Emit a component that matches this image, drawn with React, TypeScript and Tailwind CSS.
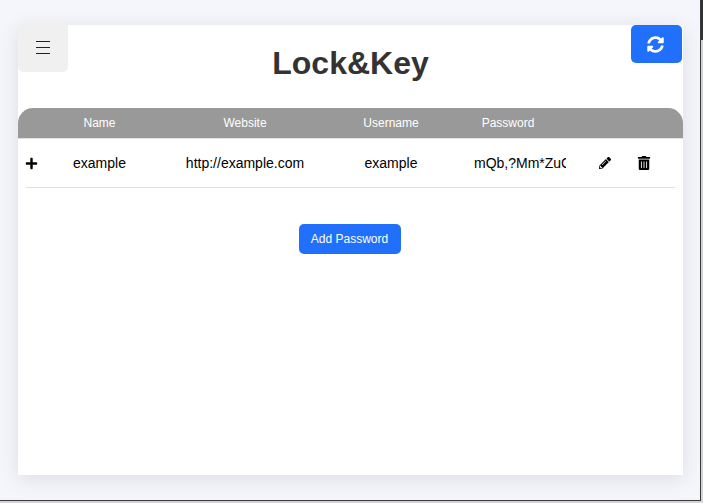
import { FaPencilAlt, FaPlus, FaSyncAlt, FaTrashAlt } from "react-icons/fa";

const rowGrid = "grid grid-cols-[38px_87px_204px_88px_146px_47px_1fr] items-center";

export default function App() {
    return (
        <div className="relative h-[503px] w-[703px] overflow-hidden bg-[#d4d4d6] font-['Liberation_Sans',Arial,sans-serif]">
            {/* Neighbouring window peeking in at the top right */}
            <div className="absolute top-0 right-0 h-[40px] w-[2px] bg-[#333]" />
            <div className="h-[501px] w-[701px] border-r border-b border-[#3a3a3a] bg-[#f4f6fb] pt-[25px] pl-[18px]">
                <main className="relative h-[450px] w-[665px] bg-white shadow-[0_4px_20px_rgba(0,0,0,0.1)]">
                    {/* Menu and refresh sit over the card corners */}
                    <button className="absolute -top-[3px] left-0 flex h-[50px] w-[50px] items-center justify-center rounded-[5px] bg-[#f0f0f0] pt-[1px]">
                        <svg width="14" height="13" viewBox="0 0 14 13" stroke="#222" strokeWidth="1">
                            <path d="M0 .5h14M0 6.5h14M0 12.5h14" />
                        </svg>
                    </button>
                    <button className="absolute top-0 right-[1px] flex h-[38px] w-[51px] items-center justify-center rounded-[5px] bg-[#2170fb] pr-[3px] text-white">
                        <FaSyncAlt size={17} />
                    </button>

                    <h1 className="pt-[20px] pb-[26px] text-center text-[32px] leading-[37px] font-bold text-[#333]">
                        Lock&amp;Key
                    </h1>

                    <div className={`${rowGrid} h-[31px] rounded-t-[15px] border-b border-[#e2e2e2] bg-[#999] text-center text-xs text-white`}>
                        <span />
                        <span>Name</span>
                        <span>Website</span>
                        <span>Username</span>
                        <span>Password</span>
                    </div>

                    <div className={`${rowGrid} h-[48px] text-center text-sm text-black`}>
                        <FaPlus size={13} className="ml-[7px]" />
                        <span>example</span>
                        <span>http://example.com</span>
                        <span>example</span>
                        <span className="ml-[39px] w-[92px] overflow-hidden text-left whitespace-nowrap">mQb,?Mm*ZuC</span>
                        <FaPencilAlt size={12} className="mx-auto" />
                        <FaTrashAlt size={14} className="ml-[9px]" />
                    </div>
                    <div className="mx-[8px] h-px bg-[#e0e0e0]" />

                    <div className="flex justify-center pt-[36px] pr-[2px]">
                        <button className="h-[30px] w-[102px] rounded-[5px] bg-[#2170fb] text-xs text-white">
                            Add Password
                        </button>
                    </div>
                </main>
            </div>
        </div>
    );
}
